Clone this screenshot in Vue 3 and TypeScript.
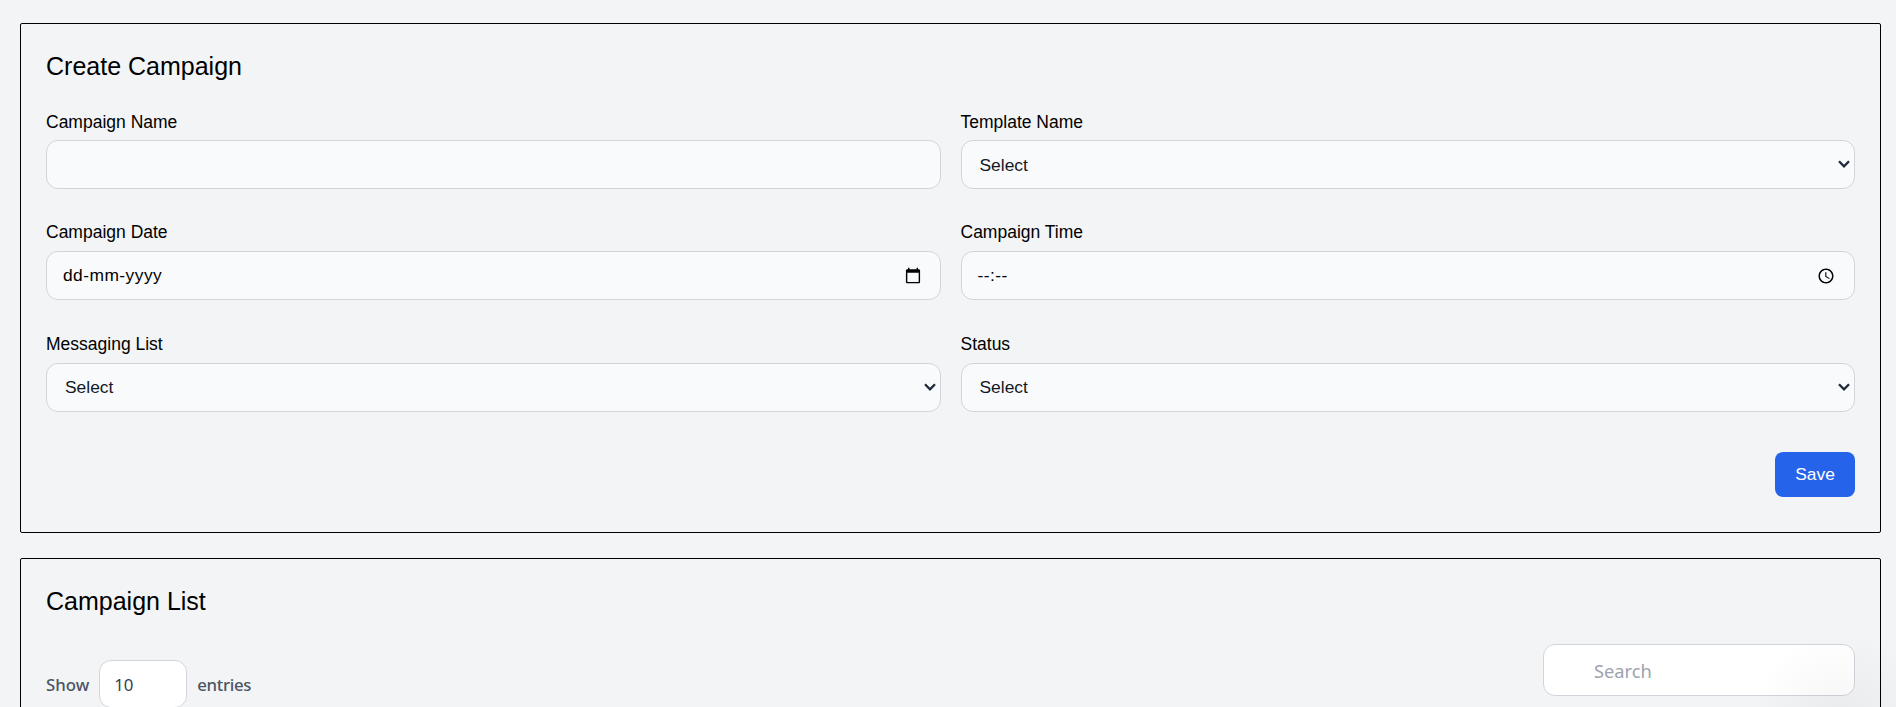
<script setup lang="ts">
import { ref } from "vue";

const name = ref("");
const search = ref("");
const pageSize = ref("10");
const selectOptions = ["Select"];
</script>

<template>
  <main class="page">
    <section class="card create">
      <h2 class="title">Create Campaign</h2>
      <div class="form-grid">
        <div class="field">
          <label for="campaign-name">Campaign Name</label>
          <input id="campaign-name" v-model="name" class="control" type="text" />
        </div>
        <div class="field">
          <label for="template-name">Template Name</label>
          <div class="picker">
            <select id="template-name" class="control select">
              <option v-for="o in selectOptions" :key="o">{{ o }}</option>
            </select>
            <svg class="chevron" viewBox="0 0 12 8" aria-hidden="true"><path d="M1 1.3 6 6.3 11 1.3" /></svg>
          </div>
        </div>
        <div class="field">
          <label for="campaign-date">Campaign Date</label>
          <div class="picker">
            <input id="campaign-date" class="control masked" type="date" />
            <span class="mask-text">dd-mm-yyyy</span>
          </div>
        </div>
        <div class="field">
          <label for="campaign-time">Campaign Time</label>
          <div class="picker">
            <input id="campaign-time" class="control masked" type="time" />
            <span class="mask-text">--:--</span>
          </div>
        </div>
        <div class="field">
          <label for="messaging-list">Messaging List</label>
          <div class="picker">
            <select id="messaging-list" class="control select">
              <option v-for="o in selectOptions" :key="o">{{ o }}</option>
            </select>
            <svg class="chevron" viewBox="0 0 12 8" aria-hidden="true"><path d="M1 1.3 6 6.3 11 1.3" /></svg>
          </div>
        </div>
        <div class="field">
          <label for="status">Status</label>
          <div class="picker">
            <select id="status" class="control select">
              <option v-for="o in selectOptions" :key="o">{{ o }}</option>
            </select>
            <svg class="chevron" viewBox="0 0 12 8" aria-hidden="true"><path d="M1 1.3 6 6.3 11 1.3" /></svg>
          </div>
        </div>
      </div>
      <div class="actions">
        <button class="save" type="button">Save</button>
      </div>
    </section>

    <section class="card list">
      <h2 class="title">Campaign List</h2>
      <div class="toolbar">
        <div class="show">
          <span>Show</span>
          <input v-model="pageSize" class="size" type="text" />
          <span class="entries">entries</span>
        </div>
        <input v-model="search" class="search" type="text" placeholder="Search" />
      </div>
    </section>
    <div class="corner-glow" aria-hidden="true"></div>
  </main>
</template>

<style scoped>
.page {
  position: relative;
  box-sizing: border-box;
  height: 707px;
  overflow: hidden;
  padding: 23px 15px 0 20px;
  display: flex;
  flex-direction: column;
  gap: 25px;
  background: #f3f4f6;
  font-family: "Liberation Sans", Arial, sans-serif;
  color: #000;
}
.card {
  box-sizing: border-box;
  border: 1px solid #000;
  border-radius: 2px;
  padding: 25px;
}
.create {
  height: 510px;
  flex: none;
}
.list {
  flex: none;
  height: 400px;
}
.title {
  margin: 0;
  font-size: 25px;
  line-height: 35px;
  font-weight: 400;
}
.form-grid {
  margin-top: 25px;
  display: grid;
  grid-template-columns: 1fr 1fr;
  column-gap: 20px;
  row-gap: 31.4px;
}
.field label {
  display: block;
  font-size: 17.5px;
  line-height: 24px;
  margin-bottom: 7px;
}
.field:nth-child(-n + 2) label {
  padding-top: 1px;
  margin-bottom: 6px;
}
.control {
  box-sizing: border-box;
  display: block;
  width: 100%;
  height: 49px;
  padding: 8px 16px;
  border: 1px solid #d1d5db;
  border-radius: 12px;
  background-color: #f9fafb;
  font-family: "Liberation Sans", Arial, sans-serif;
  font-size: 17.4px;
  color: #111827;
  outline: none;
}
.select {
  appearance: none;
  padding-left: 18px;
  font-size: 17.4px;
}
.picker {
  position: relative;
}
.chevron {
  position: absolute;
  right: 5px;
  top: 20px;
  width: 12px;
  height: 8px;
  pointer-events: none;
}
.chevron path {
  fill: none;
  stroke: #1f2937;
  stroke-width: 2.3;
}
.masked::-webkit-datetime-edit {
  opacity: 0;
}
.mask-text {
  position: absolute;
  left: 17px;
  top: 0;
  line-height: 49px;
  font-size: 17.4px;
  letter-spacing: 0.45px;
  color: #000;
  pointer-events: none;
}
.actions {
  margin-top: 40px;
  display: flex;
  justify-content: flex-end;
}
.save {
  width: 80px;
  height: 45px;
  border: none;
  border-radius: 8px;
  background: #2563eb;
  color: #fff;
  font-family: "Liberation Sans", Arial, sans-serif;
  font-size: 17.4px;
}
.toolbar {
  margin-top: 25px;
  display: flex;
  justify-content: space-between;
  align-items: flex-start;
}
.show {
  display: flex;
  align-items: center;
  gap: 10px;
  margin-top: 16px;
  font-family: "Noto Sans", "Open Sans", sans-serif;
  font-size: 16.8px;
  font-weight: 500;
  color: #4b5563;
}
.entries {
  letter-spacing: -0.3px;
}
.size {
  box-sizing: border-box;
  width: 88px;
  height: 48px;
  padding: 0 15px 0 14px;
  border: 1px solid #d1d5db;
  border-radius: 12px;
  background: #fff;
  font-family: "Noto Sans", "Open Sans", sans-serif;
  font-size: 16.8px;
  color: #374151;
  outline: none;
}
.search {
  box-sizing: border-box;
  width: 312px;
  height: 52px;
  padding: 0 16px 0 50px;
  border: 1px solid #d1d5db;
  border-radius: 12px;
  background: #fff;
  font-family: "Noto Sans", "Open Sans", sans-serif;
  font-size: 18.3px;
  outline: none;
}
.search::placeholder {
  color: #9ca3af;
}
.corner-glow {
  position: absolute;
  left: 1750px;
  top: 630px;
  width: 180px;
  height: 180px;
  background: radial-gradient(circle, rgba(0, 0, 0, 0.04), rgba(0, 0, 0, 0) 70%);
  pointer-events: none;
}
</style>

<style>
html,
body {
  margin: 0;
  overflow: hidden;
  background: #f3f4f6;
}
</style>
